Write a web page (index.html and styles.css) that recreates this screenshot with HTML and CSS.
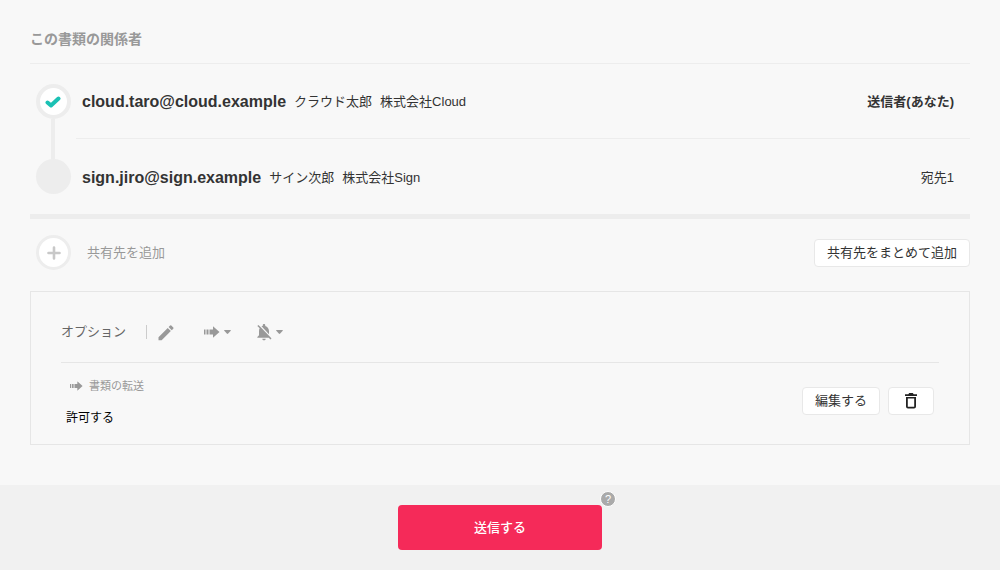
FILE: index.html
```html
<!DOCTYPE html>
<html lang="ja">
<head>
	<meta charset="UTF-8">
	<meta name="viewport" content="width=device-width, initial-scale=1">
	<title>書類の送信</title>
	<link rel="stylesheet" href="styles.css">
</head>
<body>
	<svg class="sprite" aria-hidden="true">
		<symbol id="forward" viewBox="0 0 16 12">
			<path d="M0 3.500h1.500v5H0zM2.500 3.500h2v5h-2zM5.500 3.500H9V0.300L15.500 6 9 11.700V8.500H5.500z"/>
		</symbol>
		<symbol id="caret" viewBox="0 0 7 4">
			<path d="M0.600 0h5.800q.8 0 .3.700L4.200 3.600q-.7.700-1.400 0L.3.700Q-.2 0 .6 0z"/>
		</symbol>
	</svg>

	<main class="content">
		<h1 class="title">この書類の関係者</h1>
		<ol class="members">
			<li class="member">
				<div class="rail">
					<span class="circle done">
						<svg width="16" height="12" viewBox="0 0 16 12"><path d="M2.500 6.500l3.500 3L13.500 2.500" fill="none" stroke="#1bc1b4" stroke-width="4" stroke-linecap="round" stroke-linejoin="round"/></svg>
					</span>
					<span class="line"></span>
				</div>
				<div class="info">
					<strong class="mail">cloud.taro@cloud.example</strong>
					<span>クラウド太郎</span>
					<span>株式会社Cloud</span>
					<b class="role">送信者(あなた)</b>
				</div>
			</li>
			<li class="member">
				<div class="rail last">
					<span class="line"></span>
					<span class="circle"></span>
				</div>
				<div class="info">
					<strong class="mail">sign.jiro@sign.example</strong>
					<span>サイン次郎</span>
					<span>株式会社Sign</span>
					<span class="role">宛先1</span>
				</div>
			</li>
		</ol>

		<div class="share">
			<button type="button" class="share-add">
				<span class="circle plus">
					<svg width="14" height="14" viewBox="0 0 14 14"><path d="M7 1.500v11M1.500 7h11" stroke="#c8c8c8" stroke-width="2.600" stroke-linecap="round"/></svg>
				</span>
				共有先を追加
			</button>
			<button type="button" class="btn">共有先をまとめて追加</button>
		</div>

		<section class="option">
			<div class="toolbar">
				<h2 class="option-title">オプション</h2>
				<button type="button" class="tool" aria-label="メッセージを編集">
					<svg width="20" height="20" viewBox="0 0 24 24"><path d="M3 18.250V22h3.750L17.810 10.940l-3.750-3.750L3 18.250zM20.710 8.040a1 1 0 0 0 0-1.410l-2.340-2.340a1 1 0 0 0-1.410 0l-1.830 1.830 3.750 3.750 1.830-1.830z"/></svg>
				</button>
				<button type="button" class="tool" aria-label="書類の転送">
					<svg width="16" height="12"><use href="#forward"/></svg>
					<svg width="7" height="4"><use href="#caret"/></svg>
				</button>
				<button type="button" class="tool" aria-label="通知">
					<svg width="20" height="20" viewBox="0 0 24 24"><path d="M20 18.690L7.840 6.140 5.270 3.490 4 4.760l2.800 2.800v.01c-.52.990-.8 2.160-.8 3.420v5l-2 2v1h13.730l2 2L21 19.720l-1-1.030zM12 22c1.110 0 2-.890 2-2h-4c0 1.110.890 2 2 2zm6-7.320V11c0-3.080-1.640-5.640-4.500-6.320V4c0-.830-.670-1.500-1.500-1.500s-1.500.670-1.500 1.500v.680c-.150.030-.290.080-.420.120-.1.030-.2.070-.3.110h-.01c-.01 0-.01 0-.02.010-.230.090-.460.200-.680.310 0 0-.01 0-.01.010L18 14.680z"/></svg>
					<svg width="7" height="4"><use href="#caret"/></svg>
				</button>
			</div>
			<div class="setting">
				<div class="setting-body">
					<h3 class="setting-name"><svg width="13" height="10" viewBox="0 0 16 12"><use href="#forward"/></svg>書類の転送</h3>
					<p class="setting-value">許可する</p>
				</div>
				<button type="button" class="btn">編集する</button>
				<button type="button" class="btn btn-trash" aria-label="削除">
					<svg width="12" height="16" viewBox="0 0 12 16"><path d="M0 1.200h3.300L4.200 0h3.600l.9 1.200H12V3H0zM1 4h10v9.500q0 2-2 2H3q-2 0-2-2zM2.800 5.600v8.200h6.400V5.600z" fill-rule="evenodd"/></svg>
				</button>
			</div>
		</section>
	</main>

	<footer class="footer">
		<div class="send-wrap">
			<button type="button" class="send">送信する</button>
			<button type="button" class="help" aria-label="ヘルプ">?</button>
		</div>
	</footer>
</body>
</html>
```

FILE: styles.css
```css
*{ margin: 0; padding: 0; box-sizing: border-box; }
body{ min-height: 100vh; display: flex; flex-direction: column; background: #f8f8f8; color: #333; font: 13px/20px "Liberation Sans", "Noto Sans CJK JP", sans-serif; }
ol{ list-style: none; }
button{ font: inherit; color: inherit; border: 0; background: none; cursor: pointer; }
svg{ display: block; fill: #999; }
.sprite{ position: absolute; width: 0; height: 0; }

.content{ flex: 1; padding: 29px 30px 40px; }
.title{ padding-bottom: 14px; border-bottom: 1px solid #ededed; font-size: 14px; line-height: 20px; color: #999; }

/* members */
.members{ border-bottom: 5px solid #ededed; }
.member{ display: flex; height: 75px; }
.rail{ width: 46px; padding-top: 20px; display: flex; flex-direction: column; align-items: center; }
.rail.last{ padding: 0 0 20px; }
.line{ flex: 1; width: 4px; background: #ededed; }
.circle{ display: flex; align-items: center; justify-content: center; width: 35px; height: 35px; border-radius: 50%; background: #ededed; }
.done{ border: 4px solid #ededed; background: #fff; }
.plus{ border: 3px solid #ededed; background: #fff; }
.info{ flex: 1; display: flex; align-items: center; gap: 8px; padding: 2px 16px 0 6px; border-bottom: 1px solid #ededed; }
.member:last-child .info{ border-bottom: 0; }
.mail{ font-size: 16px; }
.role{ margin-left: auto; }

/* share */
.share{ display: flex; align-items: center; justify-content: space-between; padding: 16px 0 21px; }
.share-add{ display: flex; align-items: center; gap: 16px; padding-left: 6px; color: #999; }
.btn{ height: 28px; padding: 0 12px; border: 1px solid #e8e8e8; border-radius: 4px; background: #fff; line-height: 18px; }

/* option */
.option{ padding: 20px 30px 16px; border: 1px solid #e6e6e6; }
.toolbar{ display: flex; align-items: center; gap: 26px; height: 51px; padding-bottom: 10px; border-bottom: 1px solid #e6e6e6; }
.option-title{ padding-right: 20px; margin-right: -17px; border-right: 1px solid #ccc; font-size: 13px; font-weight: normal; line-height: 14px; color: #666; }
.tool{ display: flex; align-items: center; gap: 4px; }
.tool + .tool{ margin-left: 2px; }
.tool:last-child{ margin-left: -3px; gap: 2px; }
.setting{ display: flex; align-items: flex-start; gap: 8px; padding: 13px 5px 0; }
.setting .btn{ margin-top: 11px; }
.setting-body{ flex: 1; }
.setting-name{ display: flex; align-items: center; gap: 6px; margin-bottom: 12px; padding-left: 4px; font-size: 11px; font-weight: normal; color: #999; }
.setting-value{ font-size: 12px; color: #000; }
.btn-trash{ padding: 0 16px; }
.btn-trash svg{ fill: #222; }

/* footer */
.footer{ display: flex; justify-content: center; padding: 20px; background: #f1f1f1; }
.send-wrap{ position: relative; }
.send{ width: 204px; height: 45px; border-radius: 4px; background: #f52a59; color: #fff; font-weight: 500; }
.help{ position: absolute; top: -14px; right: -14px; width: 16px; height: 16px; border: 1px solid #fff; border-radius: 50%; background: #aaa; color: #fff; font-size: 11px; line-height: 14px; }
```
